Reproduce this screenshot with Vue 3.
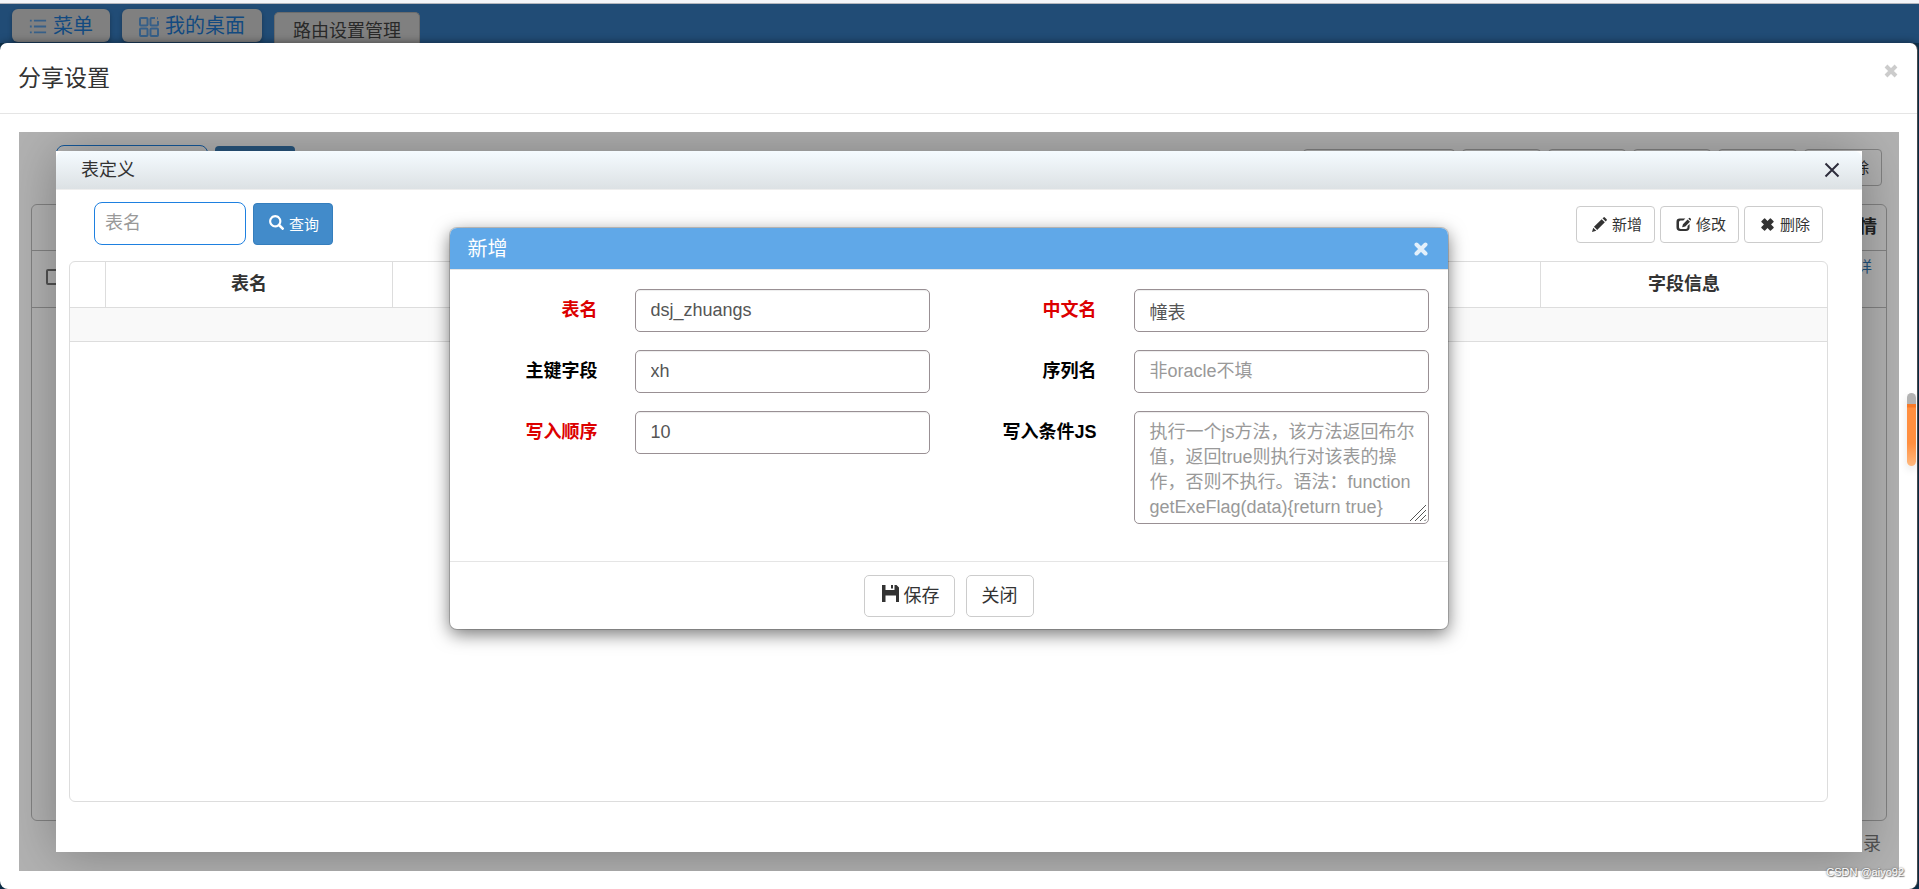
<script setup>
import { ref } from 'vue'

const keyword = ref('')
const form = ref({ table: 'dsj_zhuangs', label: '幢表', key: 'xh', seq: '', order: '10', cond: '' })
const backButtons = ['w-xl', 'w-m', 'w-s', 'w-s', 'w-m']
</script>

<template>
  <div class="page">
    <div class="strip"></div>
    <nav class="topbar">
      <button type="button" class="nav-btn">
        <svg class="ic-list" viewBox="0 0 20 18" aria-hidden="true">
          <path d="M1 2.500h2M1 9h2M1 15.500h2M5.500 2.500H19M5.500 9H19M5.500 15.500H19" />
        </svg>
        <span>菜单</span>
      </button>
      <button type="button" class="nav-btn">
        <svg class="ic-grid" viewBox="0 0 20 20" aria-hidden="true">
          <path d="M2 1h5.500q1 0 1 1v5.500q0 1-1 1H2q-1 0-1-1V2q0-1 1-1zM16 1h-3.500q-1 0-1 1v5.500q0 1 1 1H18q1 0 1-1V4M18 1.200h1M2 11.500h5.500q1 0 1 1V18q0 1-1 1H2q-1 0-1-1v-5.500q0-1 1-1zM12.500 11.500H18q1 0 1 1V18q0 1-1 1h-5.500q-1 0-1-1v-5.500q0-1 1-1z" />
        </svg>
        <span>我的桌面</span>
      </button>
      <button type="button" class="nav-tab">路由设置管理</button>
    </nav>

    <main class="sheet">
      <header class="sheet-head">
        <h1>分享设置</h1>
        <button type="button" class="sheet-close" aria-label="关闭">
          <svg viewBox="0 0 14 14"><path d="M2 2l10 10M12 2L2 12" /></svg>
        </button>
      </header>

      <div class="frame">
        <div class="back">
          <div class="back-tools">
            <div class="back-input"></div>
            <div class="back-search"></div>
            <div class="grow"></div>
            <div v-for="(w, i) in backButtons" :key="i" class="back-btn" :class="w"></div>
            <div class="back-btn w-last">除</div>
          </div>
          <div class="back-grid">
            <div class="back-row head">情</div>
            <div class="back-row item">
              <input type="checkbox" aria-label="选择" />
              <a href="#">详</a>
            </div>
          </div>
          <div class="back-foot">录</div>
        </div>
        <div class="shade"></div>

        <section class="layer">
          <header class="layer-head">
            <h2>表定义</h2>
            <button type="button" class="layer-close" aria-label="关闭">
              <svg viewBox="0 0 16 16"><path d="M1.500 1.500l13 13M14.500 1.500l-13 13" /></svg>
            </button>
          </header>
          <div class="layer-body">
            <div class="tools">
              <input v-model="keyword" class="search" type="text" placeholder="表名" aria-label="表名" />
              <button type="button" class="query">
                <svg viewBox="0 0 1200 1200" aria-hidden="true">
                  <path transform="matrix(1 0 0 -1 0 1200)" d="M500 1191q100 0 191-39t156.500-104.500t104.500-156.500t39-191l-1-2l1-5q0-141-78-262l275-274q23-26 22.500-44.500t-22.500-42.500l-59-58q-26-20-46.500-20t-39.500 20l-275 274q-119-77-261-77l-5 1l-2-1q-100 0-191 39t-156.500 104.500t-104.500 156.500t-39 191t39 191t104.500 156.500t156.500 104.500t191 39zM500 1022q-88 0-162-43t-117-117t-43-162t43-162t117-117t162-43t162 43t117 117t43 162t-43 162t-117 117t-162 43z" />
                </svg>
                <span>查询</span>
              </button>
              <div class="actions">
                <button type="button" class="act">
                  <svg viewBox="0 0 16 16" aria-hidden="true">
                    <path d="M0 16l1.300-4.600 3.300 3.300zM2.100 10.500L10.300 2.300l3.400 3.400-8.200 8.200zM11.200 1.400L12.300.4q.7-.6 1.400 0l1.900 1.900q.6.700 0 1.400l-1 1.100z" />
                  </svg>
                  <span>新增</span>
                </button>
                <button type="button" class="act">
                  <svg viewBox="0 0 16 16" aria-hidden="true">
                    <path d="M4 1.500h6L7.800 3.700H5q-1.800 0-1.800 1.800V11q0 1.800 1.800 1.800h5.500q1.800 0 1.800-1.800V9.700l2.200-2.200V11q0 4-4 4H4.500q-4 0-4-4V5q0-3.500 3.500-3.500zM6.500 11l.9-3.400 5-5 2.500 2.500-5 5zM13.100 1.900l.9-.9q.5-.4 1 0l1 1q.4.500 0 1l-.6.900z" />
                  </svg>
                  <span>修改</span>
                </button>
                <button type="button" class="act">
                  <svg viewBox="0 0 16 16" aria-hidden="true">
                    <path d="M1.500 4.400l2.900-2.900q.5-.4 1 0L8 4.200l2.600-2.700q.5-.4 1 0l2.900 2.900q.4.500 0 1L11.800 8l2.700 2.600q.4.500 0 1l-2.900 2.900q-.5.400-1 0L8 11.800l-2.600 2.700q-.5.400-1 0l-2.900-2.900q-.4-.5 0-1L4.200 8 1.500 5.400q-.4-.5 0-1z" />
                  </svg>
                  <span>删除</span>
                </button>
              </div>
            </div>

            <div class="grid">
              <table>
                <colgroup><col class="pick" /><col span="6" /></colgroup>
                <thead>
                  <tr><th></th><th>表名</th><th></th><th></th><th></th><th></th><th>字段信息</th></tr>
                </thead>
                <tbody>
                  <tr><td colspan="7"></td></tr>
                </tbody>
              </table>
            </div>

            <form class="modal" @submit.prevent>
              <header class="modal-head">
                <h3>新增</h3>
                <button type="button" class="modal-close" aria-label="关闭">
                  <svg viewBox="0 0 14 14"><path d="M2.500 2.500l9 9M11.500 2.500l-9 9" /></svg>
                </button>
              </header>
              <div class="fields">
                <label for="f-table" class="must">表名</label>
                <input id="f-table" v-model="form.table" type="text" />
                <label for="f-label" class="must">中文名</label>
                <input id="f-label" v-model="form.label" type="text" />
                <label for="f-key">主键字段</label>
                <input id="f-key" v-model="form.key" type="text" />
                <label for="f-seq">序列名</label>
                <input id="f-seq" v-model="form.seq" type="text" placeholder="非oracle不填" />
                <label for="f-order" class="must">写入顺序</label>
                <input id="f-order" v-model="form.order" type="text" />
                <label for="f-cond">写入条件JS</label>
                <div class="area">
                  <textarea id="f-cond" v-model="form.cond" placeholder="执行一个js方法，该方法返回布尔值，返回true则执行对该表的操作，否则不执行。语法：function getExeFlag(data){return true}"></textarea>
                  <svg class="grip" viewBox="0 0 18 18" aria-hidden="true">
                    <path d="M1 17L17 1M6 17L17 6M11 17l6-6M15.500 17l1.500-1.500" />
                  </svg>
                </div>
              </div>
              <footer class="modal-foot">
                <button type="submit" class="save">
                  <svg viewBox="0 0 17 17" aria-hidden="true">
                    <path d="M0 0h3.500v5h9V0h2l2.500 2.500V17h-3v-6.500H3.500V17H0zM9 0h2v3.500H9z" />
                  </svg>
                  <span>保存</span>
                </button>
                <button type="button">关闭</button>
              </footer>
            </form>
          </div>
        </section>
      </div>
      <div class="thumb"></div>
      <div class="mark">CSDN @aiyo92</div>
    </main>
  </div>
</template>

<style>
body {
  background: #0d3350;
}
</style>

<style scoped>
.page,
.page * {
  box-sizing: border-box;
}
.page {
  display: flex;
  flex-direction: column;
  min-height: 100vh;
  color: #333;
  font-family: "Liberation Sans", "Noto Sans CJK SC", sans-serif;
  font-size: 18px;
  line-height: 25px;
}
button,
input,
textarea {
  margin: 0;
  font: inherit;
}
button {
  color: inherit;
}
h1,
h2,
h3 {
  margin: 0;
  font-weight: 400;
}
svg {
  display: block;
  flex: none;
}
.strip {
  height: 4px;
  background: #f4f5f9;
  border-bottom: 1px solid #b4b6bd;
}
.topbar {
  display: flex;
  gap: 12px;
  height: 39px;
  padding: 5px 12px 0;
  background: #214c76;
}
.nav-btn {
  display: flex;
  align-items: center;
  height: 33px;
  padding: 2px 17px 0;
  gap: 6px;
  border: 0;
  border-radius: 6px;
  background: #808080;
  color: #124a80;
  font-size: 20px;
  box-shadow: 0 2px 4px rgba(0, 0, 0, 0.3);
}
.nav-btn svg {
  fill: none;
  stroke: #365f88;
  stroke-width: 2;
}
.ic-list {
  width: 18px;
  height: 17px;
}
.ic-grid {
  width: 20px;
  height: 20px;
}
.nav-tab {
  height: 31px;
  margin-top: 3px;
  padding: 0 18px;
  border: 1px solid #6c6c6c;
  border-bottom: 0;
  border-radius: 5px 5px 0 0;
  background: #808080;
  color: #292929;
  line-height: 36px;
}
.sheet {
  position: relative;
  display: flex;
  flex: 1;
  flex-direction: column;
  margin-right: 2px;
  border-radius: 7px 7px 8px 8px;
  background: #fff;
  box-shadow: 0 0 8px rgba(0, 0, 0, 0.5), 1px 0 0 #5c6064;
}
.sheet-head {
  display: flex;
  align-items: center;
  justify-content: space-between;
  height: 71px;
  padding: 0 19px 0 18px;
  border-bottom: 1px solid #e5e5e5;
}
.sheet-head h1 {
  font-size: 23px;
}
.sheet-close {
  align-self: flex-start;
  margin-top: 21px;
  padding: 0;
  border: 0;
  background: none;
}
.sheet-close svg {
  width: 14px;
  height: 14px;
  fill: none;
  stroke: #ccc;
  stroke-width: 4;
}
.frame {
  position: relative;
  display: flex;
  flex: 1;
  flex-direction: column;
  min-height: 600px;
  margin: 18px 18px 18px 19px;
  overflow: hidden;
}
.back {
  display: flex;
  flex: 1;
  flex-direction: column;
  padding: 13px 12px 0;
}
.back-tools {
  display: flex;
  align-items: center;
  gap: 7px;
  height: 44px;
  padding: 0 5px 0 25px;
}
.back-input {
  width: 152px;
  height: 44px;
  border: 1px solid #1e80e0;
  border-radius: 8px;
}
.back-search {
  width: 80px;
  height: 42px;
  border-radius: 4px;
  background: #3a7cb5;
}
.grow {
  flex: 1;
}
.back-btn {
  height: 37px;
  padding: 0 12px;
  border: 1px solid #bbb;
  border-radius: 4px;
  font-size: 15px;
  line-height: 35px;
  text-align: right;
}
.w-xl {
  width: 152px;
}
.w-m {
  width: 79px;
}
.w-s,
.w-last {
  width: 78px;
}
.back-grid {
  flex: 1;
  margin-top: 15px;
  border: 1px solid #bbb;
  border-radius: 6px;
}
.back-row {
  display: flex;
  border-bottom: 1px solid #bbb;
}
.head {
  align-items: center;
  justify-content: flex-end;
  height: 46px;
  padding-right: 9px;
  font-weight: 700;
}
.item {
  justify-content: space-between;
  height: 57px;
  padding: 3px 14px 0;
  font-size: 15px;
}
.item input {
  appearance: none;
  margin-top: 15px;
  width: 16px;
  height: 16px;
  border: 2px solid #767676;
  border-radius: 2px;
}
.item a {
  color: #337ab7;
  text-decoration: none;
}
.back-foot {
  height: 50px;
  padding: 11px 6px 0;
  color: #777;
  text-align: right;
}
.shade {
  position: absolute;
  inset: 0;
  background: rgba(0, 0, 0, 0.3);
}
.layer {
  position: absolute;
  inset: 19px 37px;
  display: flex;
  flex-direction: column;
  background: #fff;
  box-shadow: 1px 1px 50px rgba(0, 0, 0, 0.3);
}
.layer-head {
  display: flex;
  align-items: center;
  justify-content: space-between;
  height: 39px;
  padding: 0 22px 0 25px;
  border-bottom: 1px solid #eee;
  border-radius: 8px 8px 0 0;
  background: linear-gradient(#f5fbff, #dce1e4);
}
.layer-head h2 {
  font-size: 18px;
}
.layer-close {
  padding: 0;
  border: 0;
  background: none;
}
.layer-close svg {
  width: 16px;
  height: 16px;
  fill: none;
  stroke: #2e2d3c;
  stroke-width: 2;
}
.layer-body {
  position: relative;
  display: flex;
  flex: 1;
  flex-direction: column;
  margin-right: 21px;
  padding: 12px 13px 50px;
}
.tools {
  display: flex;
  gap: 7px;
  padding: 0 5px 0 25px;
}
.search {
  width: 152px;
  height: 43px;
  padding: 0 10px;
  border: 1px solid #1e80e0;
  border-radius: 8px;
  background: #fff;
  line-height: 41px;
}
::placeholder {
  color: #999;
  opacity: 1;
}
.query {
  display: flex;
  align-items: center;
  gap: 5px;
  height: 42px;
  margin-top: 1px;
  padding: 0 13px 0 15px;
  border: 1px solid #357ebd;
  border-radius: 4px;
  background: #428bca;
  color: #fff;
  font-size: 15px;
}
.query svg {
  width: 15px;
  height: 15px;
  margin-bottom: 3px;
  fill: #fff;
}
.actions {
  display: flex;
  gap: 5px;
  margin: 4px 0 0 auto;
}
.act {
  display: flex;
  align-items: center;
  gap: 5px;
  height: 37px;
  padding: 0 12px 0 15px;
  border: 1px solid #ccc;
  border-radius: 4px;
  background: #fff;
  font-size: 15px;
}
.act svg {
  width: 15px;
  height: 15px;
  fill: #333;
}
.grid {
  flex: 1;
  margin-top: 16px;
  border: 1px solid #ddd;
  border-radius: 6px;
}
table {
  width: 100%;
  table-layout: fixed;
  border-collapse: separate;
  border-spacing: 0;
}
.pick {
  width: 35px;
}
th,
td {
  padding: 0;
  border-bottom: 1px solid #ddd;
}
th {
  height: 46px;
}
th + th {
  border-left: 1px solid #ddd;
}
td {
  height: 34px;
  background: #f9f9f9;
}
.modal {
  position: absolute;
  top: 38px;
  right: 0;
  left: 0;
  width: 998px;
  max-width: 100%;
  margin: 0 auto;
  border-radius: 7px;
  background: #fff;
  box-shadow: 0 0 0 1px rgba(0, 0, 0, 0.18), 0 5px 18px rgba(0, 0, 0, 0.55);
}
.modal-head {
  display: flex;
  align-items: center;
  justify-content: space-between;
  height: 42px;
  padding: 1px 20px 0 18px;
  border-bottom: 1px solid #e5e5e5;
  border-radius: 7px 7px 0 0;
  background: #60a8e8;
  color: #fff;
}
.modal-head h3 {
  font-size: 20px;
}
.modal-close {
  padding: 0;
  border: 0;
  background: none;
}
.modal-close svg {
  width: 14px;
  height: 14px;
  fill: none;
  stroke: #e3f0fb;
  stroke-width: 4;
  stroke-linecap: round;
}
.fields {
  display: grid;
  grid-template-columns: 148px 1fr 130px 1fr;
  gap: 18px 37px;
  padding: 19px 19px 37px 0;
}
.fields label {
  color: #000;
  font-weight: 700;
  line-height: 43px;
  text-align: right;
}
.fields .must {
  color: #dc0000;
}
.fields input,
.fields textarea {
  display: block;
  width: 100%;
  min-width: 0;
  height: 43px;
  padding: 0 15px;
  border: 1px solid #999094;
  border-radius: 5px;
  background: #fff;
  color: #555;
  box-shadow: inset 0 1px 1px rgba(0, 0, 0, 0.075);
}
.fields input {
  line-height: 41px;
}
.area {
  position: relative;
}
.fields textarea {
  height: 113px;
  padding: 8px 8px 0 15px;
  overflow: hidden;
  resize: none;
}
.grip {
  position: absolute;
  right: 2px;
  bottom: 2px;
  width: 18px;
  height: 18px;
  fill: none;
  stroke: #555;
}
.modal-foot {
  display: flex;
  justify-content: center;
  gap: 11px;
  padding: 13px 0 12px;
  border-top: 1px solid #e5e5e5;
}
.modal-foot button {
  display: flex;
  align-items: center;
  gap: 5px;
  height: 42px;
  padding: 0 15px;
  border: 1px solid #ccc;
  border-radius: 5px;
  background: #fff;
}
.modal-foot .save {
  padding: 0 14px 0 17px;
}
.modal-foot svg {
  width: 17px;
  height: 17px;
  margin-bottom: 5px;
  fill: #333;
}
.thumb {
  position: absolute;
  top: 350px;
  right: 1px;
  width: 9px;
  height: 73px;
  border-radius: 5px;
  background: linear-gradient(#b3b3b3 11px, #f87a28 11px, #f87a28 14px, #ff8f40 15px, #ff8f40 50px, #ffb97f);
  box-shadow: 0 4px 8px rgba(0, 0, 0, 0.1);
}
.mark {
  position: absolute;
  right: 13px;
  bottom: 4px;
  color: #fff;
  font-size: 11px;
  text-shadow: 0 0 2px #555, 1px 1px 1px #777;
}
</style>
